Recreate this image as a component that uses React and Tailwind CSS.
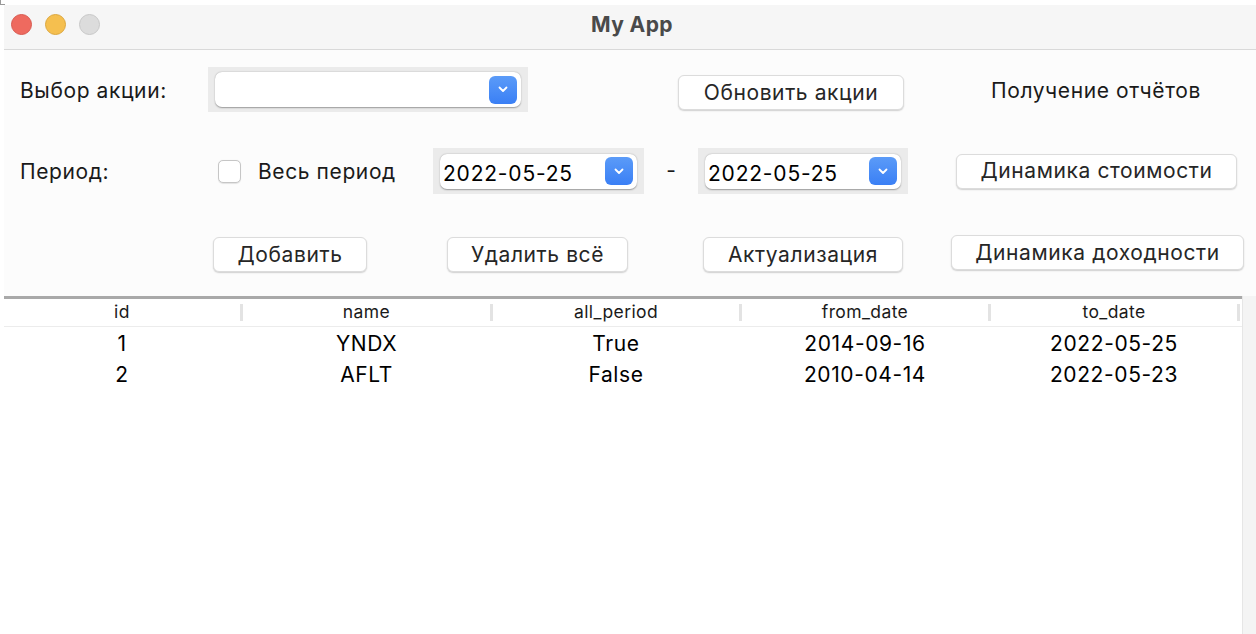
import React from "react";

const font = { fontFamily: "Inter, 'Liberation Sans', sans-serif" };

function Chevron() {
  return (
    <svg width="10" height="7" viewBox="0 0 10 7" fill="none">
      <path d="M1.5 1.5 L5 5 L8.5 1.5" stroke="white" strokeWidth="1.8" strokeLinecap="round" strokeLinejoin="round" />
    </svg>
  );
}

function Combo({ w, value, frameH = "h-[45px]" }) {
  return (
    <div className={`${w} ${frameH} bg-[#ebebeb] flex items-center px-[7px]`}>
      <div className="flex-1 h-[35px] bg-white rounded-[7px] shadow-[0_0.5px_1.5px_rgba(0,0,0,0.35)] flex items-center pl-[3px] pr-[4px]">
        <span className="flex-1 text-[21px] tracking-[0.8px] text-black leading-none pt-[4px]">{value}</span>
        <div className="w-[28px] h-[28px] rounded-[6px] bg-gradient-to-b from-[#5b9bf8] to-[#3a7ff5] flex items-center justify-center">
          <Chevron />
        </div>
      </div>
    </div>
  );
}

function Btn({ w, children, cls = "" }) {
  return (
    <div
      className={`${w} h-[35px] bg-white rounded-[6px] border border-[#dcdcdc] shadow-[0_1px_1.5px_rgba(0,0,0,0.18)] flex items-center justify-center text-[21px] tracking-[0.6px] text-[#262626] ${cls}`}
    >
      {children}
    </div>
  );
}

const cols = ["id", "name", "all_period", "from_date", "to_date"];
const widths = ["w-[239px]", "w-[250px]", "w-[249px]", "w-[249px]", "w-[249px]"];
const rows = [
  ["1", "YNDX", "True", "2014-09-16", "2022-05-25"],
  ["2", "AFLT", "False", "2010-04-14", "2022-05-23"],
];

export default function App() {
  return (
    <div className="w-[1256px] h-[634px] bg-white pl-[4px] pt-[5px] relative overflow-hidden" style={font}>
      <div className="absolute left-0 top-0 w-[5px] h-[5px] border-l border-b border-[#9a9a9a]" />
      <div className="h-[629px] flex flex-col bg-[#fcfcfc]">
        {/* title bar */}
        <div className="h-[45px] shrink-0 bg-[#f6f6f6] border-b border-[#d9d9d9] relative">
          <div className="flex items-center gap-[13px] pl-[7px] pt-[9px]">
            <div className="w-[21px] h-[21px] rounded-full bg-[#ee6a5f] border border-[#d85a50]" />
            <div className="w-[21px] h-[21px] rounded-full bg-[#f5bf4f] border border-[#dca73e]" />
            <div className="w-[21px] h-[21px] rounded-full bg-[#dcdcdc] border border-[#c8c8c8]" />
          </div>
          <div className="absolute left-0 right-0 top-0 h-[39px] flex items-center justify-center pl-[4px]">
            <span className="text-[21px] tracking-[0.4px] font-bold text-[#4a4a4a]">My App</span>
          </div>
        </div>

        {/* row 1 */}
        <div className="mt-[17px] h-[45px] flex items-start shrink-0">
          <div className="w-[204px] pl-[16px] h-full flex items-center pt-[2px] text-[21px] tracking-[0.6px] text-[#1a1a1a]">Выбор акции:</div>
          <Combo w="w-[320px]" value="" />
          <div className="ml-[150px] mt-[8px]">
            <Btn w="w-[226px]">Обновить акции</Btn>
          </div>
          <div className="ml-[87px] h-full flex items-center pt-[2px] text-[21px] tracking-[0.6px] text-[#1a1a1a]">Получение отчётов</div>
        </div>

        {/* row 2 */}
        <div className="mt-[36px] h-[46px] flex items-center shrink-0">
          <div className="w-[214px] pl-[16px] pt-[2px] text-[21px] tracking-[0.6px] text-[#1a1a1a]">Период:</div>
          <div className="w-[23px] h-[23px] rounded-[5px] bg-white border border-[#c6c6c6] shadow-[0_0.5px_1px_rgba(0,0,0,0.1)]" />
          <div className="ml-[17px] w-[175px] pt-[2px] text-[21px] tracking-[0.6px] text-[#1a1a1a]">Весь период</div>
          <Combo w="w-[211px]" frameH="h-[46px]" value="2022-05-25" />
          <div className="w-[54px] text-center text-[21px] text-[#1a1a1a]">-</div>
          <Combo w="w-[210px]" frameH="h-[46px]" value="2022-05-25" />
          <div className="ml-[48px]">
            <Btn w="w-[281px]">Динамика стоимости</Btn>
          </div>
        </div>

        {/* row 3 */}
        <div className="mt-[41px] h-[37px] flex items-start shrink-0">
          <div className="ml-[209px] mt-[2px]">
            <Btn w="w-[154px]">Добавить</Btn>
          </div>
          <div className="ml-[80px] mt-[2px]">
            <Btn w="w-[181px]">Удалить всё</Btn>
          </div>
          <div className="ml-[75px] mt-[2px]">
            <Btn w="w-[200px]">Актуализация</Btn>
          </div>
          <div className="ml-[48px]">
            <Btn w="w-[293px]">Динамика доходности</Btn>
          </div>
        </div>

        {/* table */}
        <div className="mt-[24px] flex-1 flex">
          <div className="w-[1238px] bg-white border-t-[3px] border-[#a9a9a9] flex flex-col">
            <div className="h-[28px] flex border-b border-[#ececec]">
              {cols.map((c, i) => (
                <div key={c} className={`${widths[i]} flex items-center`}>
                  <div className="flex-1 text-center text-[17.5px] tracking-[0.4px] text-[#1a1a1a]">{c}</div>
                  <div className="w-[3px] h-[17px] bg-[#e3e3e3]" />
                </div>
              ))}
            </div>
            <div className="pt-[1px]">
              {rows.map((r) => (
                <div key={r[0]} className="h-[31px] flex items-center">
                  {r.map((v, i) => (
                    <div key={i} className={`${widths[i]} pr-[3px] text-center text-[21px] tracking-[0.6px] text-black`}>
                      {v}
                    </div>
                  ))}
                </div>
              ))}
            </div>
          </div>
          <div className="flex-1 bg-[#f4f4f4] border-l border-[#e6e6e6]" />
        </div>
      </div>
    </div>
  );
}
